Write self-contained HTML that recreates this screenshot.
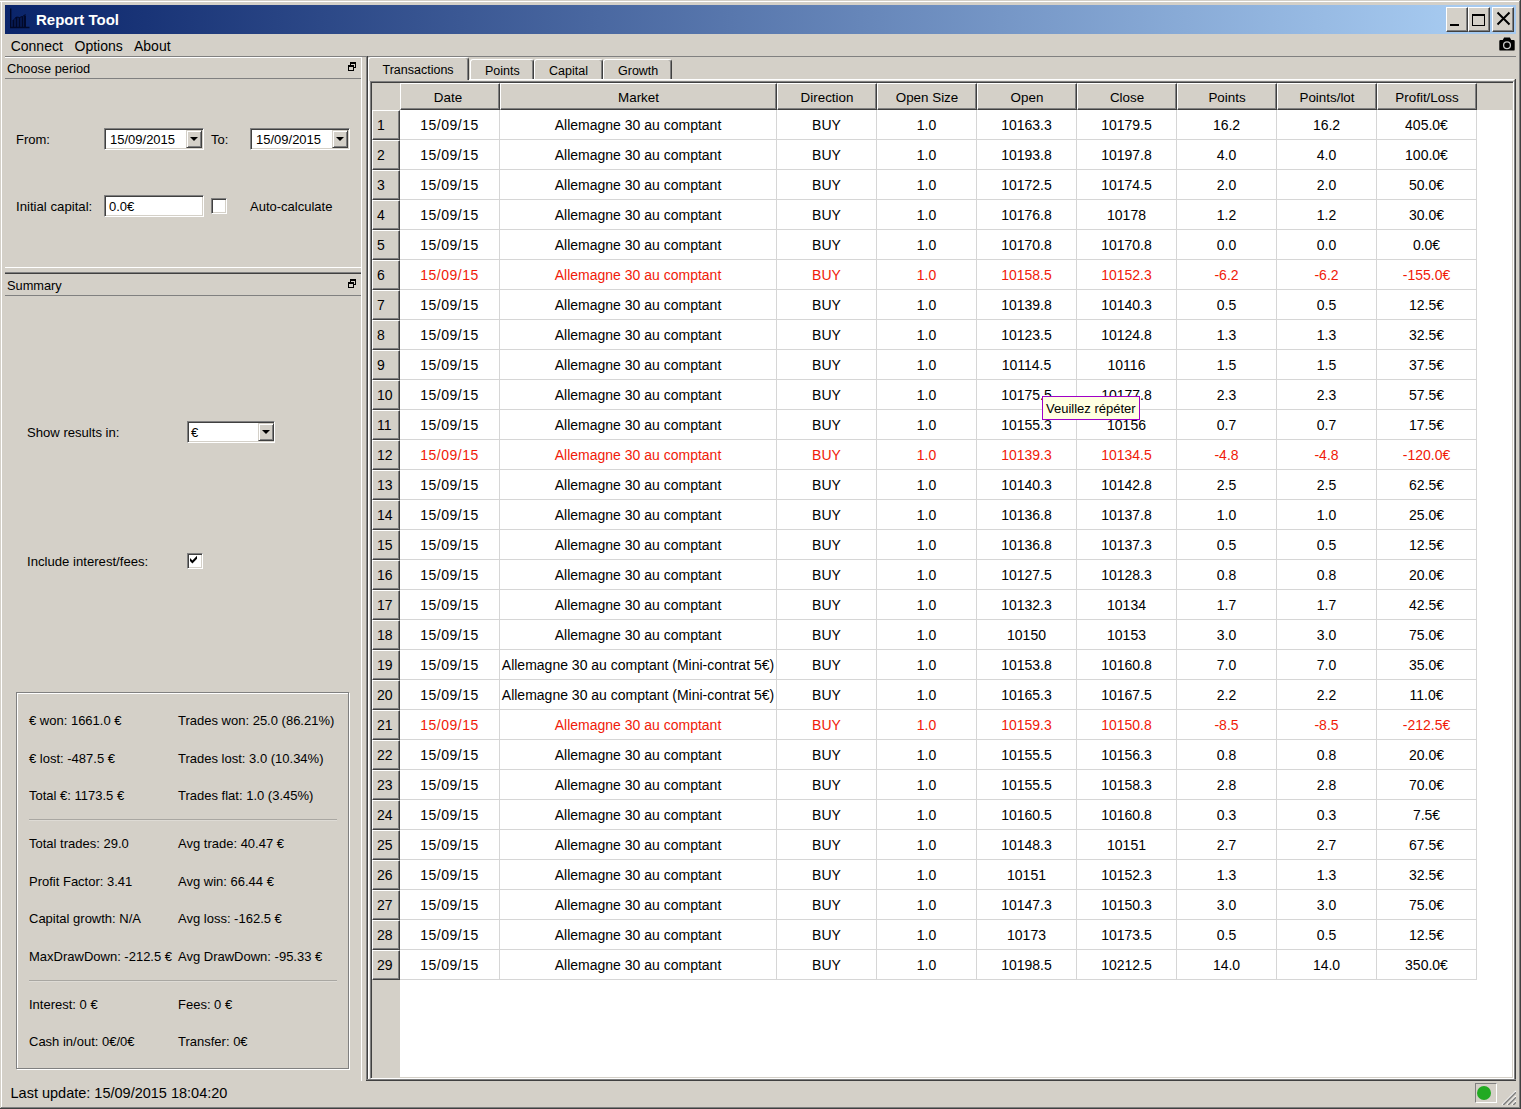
<!DOCTYPE html>
<html lang="en"><head><meta charset="utf-8"><title>Report Tool</title>
<style>
html,body{margin:0;padding:0}
body{width:1521px;height:1109px;background:#d4d0c8;position:relative;overflow:hidden;font-family:"Liberation Sans",sans-serif;color:#000}
.a{position:absolute;box-sizing:border-box}
.t{position:absolute;white-space:pre;margin:0;padding:0}
.sunk{position:absolute;box-sizing:border-box;background:#fff;border:1px solid;border-color:#808080 #fff #fff #808080;box-shadow:inset 1px 1px 0 #404040,inset -1px -1px 0 #d4d0c8}
.btn{position:absolute;box-sizing:border-box;background:#d4d0c8;border:1px solid;border-color:#fff #404040 #404040 #fff;box-shadow:inset -1px -1px 0 #808080}
.btn2{position:absolute;box-sizing:border-box;background:#d4d0c8;border:1px solid;border-color:#d4d0c8 #404040 #404040 #d4d0c8;box-shadow:inset 1px 1px 0 #fff,inset -1px -1px 0 #808080}
.hs{position:absolute;box-sizing:border-box;background:#d4d0c8;border:1px solid;border-color:#fff #404040 #404040 #fff;box-shadow:inset -1px -1px 0 #808080;text-align:center;white-space:pre;overflow:hidden}
.row{position:absolute;left:400px;width:1077px;height:30px;font-size:14px;line-height:29px}
.row span{position:absolute;top:0;height:30px;box-sizing:border-box;padding-top:1px;border-right:1px solid #d6d6d6;border-bottom:1px solid #d6d6d6;text-align:center;white-space:pre;overflow:hidden}
.red{color:#f01a08}
.tab{position:absolute;box-sizing:border-box;background:#d4d0c8;border:1px solid;border-color:#fff #404040 transparent #fff;border-bottom:0;border-radius:3px 3px 0 0;box-shadow:inset -1px 0 0 #808080;text-align:center;white-space:pre}
.arrow{position:absolute;width:0;height:0;border-left:4px solid transparent;border-right:4px solid transparent;border-top:4px solid #000}
</style></head><body>
<div class="a" style="left:0px;top:1px;width:1521px;height:1px;background:#ffffff"></div>
<div class="a" style="left:1px;top:1px;width:1px;height:1107px;background:#ffffff"></div>
<div class="a" style="left:1519px;top:1px;width:1px;height:1107px;background:#808080"></div>
<div class="a" style="left:1520px;top:0px;width:1px;height:1109px;background:#404040"></div>
<div class="a" style="left:1px;top:1107px;width:1519px;height:1px;background:#808080"></div>
<div class="a" style="left:0px;top:1108px;width:1521px;height:1px;background:#404040"></div>
<div class="a" style="left:5px;top:5px;width:1511px;height:29px;background:linear-gradient(to right,#0a246a 0%,#a6caf0 96%,#a6caf0 100%)"></div>
<svg class="a" style="left:9px;top:8px" width="22" height="22" viewBox="0 0 22 22"><g stroke="#00041e" stroke-width="1.4" fill="none" opacity=".85"><path d="M1.7 0.5V19.5H20.5"/><path d="M4.5 19V12M7.5 19V9M10.5 19V9.5M13.5 19V8.5M16 19V7.5" stroke-width="1.9"/><path d="M4.5 12L7.5 9L10.5 9.5L13.5 8.5L16.5 6.5" stroke-width="1"/></g></svg>
<div class="t " style="left:36px;top:11px;font-size:15px;line-height:17px;font-weight:bold;color:#fff">Report Tool</div>
<div class="btn" style="left:1446px;top:7px;width:22px;height:25px"></div>
<div class="btn" style="left:1468px;top:7px;width:22px;height:25px"></div>
<div class="btn" style="left:1492px;top:7px;width:22px;height:25px"></div>
<div class="a" style="left:1450px;top:24px;width:9px;height:2px;background:#000"></div>
<div class="a" style="left:1472px;top:14px;width:13px;height:12px;border:1px solid #000;border-top:2px solid #000"></div>
<svg class="a" style="left:1495px;top:10px" width="17" height="17" viewBox="0 0 17 17"><path d="M2.5 2.5L14.5 14.5M14.5 2.5L2.5 14.5" stroke="#000" stroke-width="2" fill="none"/></svg>
<div class="t " style="left:10.7px;top:37.5px;font-size:14px;line-height:16px;">Connect</div>
<div class="t " style="left:74.5px;top:37.5px;font-size:14px;line-height:16px;">Options</div>
<div class="t " style="left:134px;top:37.5px;font-size:14px;line-height:16px;">About</div>
<svg class="a" style="left:1499px;top:37px" width="16" height="15" viewBox="0 0 16 15"><path d="M1.5 3h2.3l1.3-2.6h5.8l1.3 2.6h2.3a1.2 1.2 0 0 1 1.2 1.2v8.2a1.2 1.2 0 0 1-1.2 1.2h-13a1.2 1.2 0 0 1-1.2-1.2v-8.2a1.2 1.2 0 0 1 1.2-1.2z" fill="#000"/><circle cx="8" cy="8.3" r="3.4" fill="none" stroke="#c8c8c8" stroke-width="1.3"/></svg>
<div class="a" style="left:5px;top:56px;width:1511px;height:1px;background:#808080"></div>
<div class="a" style="left:5px;top:57px;width:357px;height:1px;background:#ffffff"></div>
<div class="a" style="left:361px;top:57px;width:1px;height:1024px;background:#ffffff"></div>
<div class="a" style="left:366px;top:56px;width:1px;height:1025px;background:#808080"></div>
<div class="a" style="left:367px;top:56px;width:1px;height:1025px;background:#404040"></div>
<div class="a" style="left:5px;top:78px;width:356px;height:1px;background:#808080"></div>
<div class="a" style="left:5px;top:267px;width:357px;height:1px;background:#ffffff"></div>
<div class="a" style="left:5px;top:272px;width:356px;height:1px;background:#808080"></div>
<div class="a" style="left:5px;top:273px;width:356px;height:1px;background:#404040"></div>
<div class="a" style="left:5px;top:295px;width:356px;height:1px;background:#808080"></div>
<div class="a" style="left:350px;top:62px;width:6px;height:6px;border:1px solid #000;border-top:2px solid #000"></div>
<div class="a" style="left:348px;top:65px;width:6px;height:6px;border:1px solid #000;border-top:2px solid #000;background:#d4d0c8"></div>
<div class="a" style="left:350px;top:279px;width:6px;height:6px;border:1px solid #000;border-top:2px solid #000"></div>
<div class="a" style="left:348px;top:282px;width:6px;height:6px;border:1px solid #000;border-top:2px solid #000;background:#d4d0c8"></div>
<div class="t " style="left:7px;top:60.5px;font-size:12.8px;line-height:15px;">Choose period</div>
<div class="t " style="left:7px;top:277.5px;font-size:12.8px;line-height:15px;">Summary</div>
<div class="t " style="left:16px;top:131.5px;font-size:13px;line-height:15px;">From:</div>
<div class="sunk" style="left:104px;top:128px;width:100px;height:22px"></div>
<div class="t " style="left:110px;top:131.5px;font-size:13px;line-height:15px;">15/09/2015</div>
<div class="btn2" style="left:186px;top:130px;width:16px;height:18px"></div><div class="arrow" style="left:190px;top:137px"></div>
<div class="t " style="left:211px;top:131.5px;font-size:13px;line-height:15px;">To:</div>
<div class="sunk" style="left:250px;top:128px;width:100px;height:22px"></div>
<div class="t " style="left:256px;top:131.5px;font-size:13px;line-height:15px;">15/09/2015</div>
<div class="btn2" style="left:332px;top:130px;width:16px;height:18px"></div><div class="arrow" style="left:336px;top:137px"></div>
<div class="t " style="left:16px;top:199px;font-size:13.2px;line-height:15px;">Initial capital:</div>
<div class="sunk" style="left:104px;top:195px;width:100px;height:22px"></div>
<div class="t " style="left:109px;top:199px;font-size:13px;line-height:15px;">0.0€</div>
<div class="sunk" style="left:211px;top:198px;width:16px;height:16px"></div>
<div class="t " style="left:250px;top:198.5px;font-size:13px;line-height:15px;">Auto-calculate</div>
<div class="t " style="left:27px;top:425px;font-size:13.1px;line-height:15px;">Show results in:</div>
<div class="sunk" style="left:187px;top:421px;width:88px;height:22px"></div>
<div class="t " style="left:191px;top:425px;font-size:13px;line-height:15px;">€</div>
<div class="btn2" style="left:258px;top:423px;width:16px;height:18px"></div><div class="arrow" style="left:262px;top:430px"></div>
<div class="t " style="left:27px;top:553.5px;font-size:13.15px;line-height:15px;">Include interest/fees:</div>
<div class="sunk" style="left:187px;top:553px;width:16px;height:16px"></div>
<svg class="a" style="left:189px;top:555px" width="9" height="9" viewBox="0 0 9 9"><path d="M1 3L3.4 5.4L8 0.8V3.8L3.4 8.4L1 6z" fill="#000"/></svg>
<div class="a" style="left:17px;top:693px;width:333px;height:377px;border:1px solid #fff"></div>
<div class="a" style="left:16px;top:692px;width:333px;height:377px;border:1px solid #808080"></div>
<div class="t " style="left:29px;top:712.5px;font-size:13px;line-height:15px;">€ won: 1661.0 €</div>
<div class="t " style="left:178px;top:712.5px;font-size:13px;line-height:15px;">Trades won: 25.0 (86.21%)</div>
<div class="t " style="left:29px;top:750.5px;font-size:13px;line-height:15px;">€ lost: -487.5 €</div>
<div class="t " style="left:178px;top:750.5px;font-size:13px;line-height:15px;">Trades lost: 3.0 (10.34%)</div>
<div class="t " style="left:29px;top:787.5px;font-size:13px;line-height:15px;">Total €: 1173.5 €</div>
<div class="t " style="left:178px;top:787.5px;font-size:13px;line-height:15px;">Trades flat: 1.0 (3.45%)</div>
<div class="t " style="left:29px;top:835.5px;font-size:13px;line-height:15px;">Total trades: 29.0</div>
<div class="t " style="left:178px;top:835.5px;font-size:13px;line-height:15px;">Avg trade: 40.47 €</div>
<div class="t " style="left:29px;top:873.5px;font-size:13px;line-height:15px;">Profit Factor: 3.41</div>
<div class="t " style="left:178px;top:873.5px;font-size:13px;line-height:15px;">Avg win: 66.44 €</div>
<div class="t " style="left:29px;top:910.5px;font-size:13px;line-height:15px;">Capital growth: N/A</div>
<div class="t " style="left:178px;top:910.5px;font-size:13px;line-height:15px;">Avg loss: -162.5 €</div>
<div class="t " style="left:29px;top:949px;font-size:13px;line-height:15px;">MaxDrawDown: -212.5 €</div>
<div class="t " style="left:178px;top:949px;font-size:13px;line-height:15px;">Avg DrawDown: -95.33 €</div>
<div class="t " style="left:29px;top:996.5px;font-size:13px;line-height:15px;">Interest: 0 €</div>
<div class="t " style="left:178px;top:996.5px;font-size:13px;line-height:15px;">Fees: 0 €</div>
<div class="t " style="left:29px;top:1033.5px;font-size:13px;line-height:15px;">Cash in/out: 0€/0€</div>
<div class="t " style="left:178px;top:1033.5px;font-size:13px;line-height:15px;">Transfer: 0€</div>
<div class="a" style="left:29px;top:819px;width:308px;height:1px;background:#a9a7a2"></div>
<div class="a" style="left:29px;top:820px;width:308px;height:1px;background:#dedbd5"></div>
<div class="a" style="left:29px;top:980px;width:308px;height:1px;background:#a9a7a2"></div>
<div class="a" style="left:29px;top:981px;width:308px;height:1px;background:#dedbd5"></div>
<div class="t " style="left:10.5px;top:1085px;font-size:14.5px;line-height:16px;">Last update: 15/09/2015 18:04:20</div>
<div class="a" style="left:1475px;top:1083px;width:22px;height:20px;border:1px solid;border-color:#808080 #fff #fff #808080"></div>
<div class="a" style="left:1477px;top:1086px;width:14px;height:14px;background:#22aa22;border-radius:50%"></div>
<svg class="a" style="left:1501px;top:1090px" width="15" height="15" viewBox="0 0 15 15"><g stroke-width="1.2" fill="none"><path d="M1 15L15 1M6 15L15 6M11 15L15 11" stroke="#fff"/><path d="M2.2 15L15 2.2M7.2 15L15 7.2M12.2 15L15 12.2" stroke="#808080" stroke-width="1.6"/></g></svg>
<div class="a" style="left:368px;top:58px;width:1px;height:1021px;background:#ffffff"></div>
<div class="a" style="left:369px;top:81px;width:1px;height:997px;background:#e9e7e3"></div>
<div class="a" style="left:469px;top:79px;width:1045px;height:1px;background:#ffffff"></div>
<div class="a" style="left:469px;top:80px;width:1044px;height:1px;background:#e9e7e3"></div>
<div class="a" style="left:1514px;top:80px;width:1px;height:1001px;background:#808080"></div>
<div class="a" style="left:1515px;top:79px;width:1px;height:1002px;background:#404040"></div>
<div class="a" style="left:366px;top:1079px;width:1150px;height:1px;background:#808080"></div>
<div class="a" style="left:366px;top:1080px;width:1150px;height:1px;background:#404040"></div>
<div class="tab" style="left:368px;top:57px;width:101px;height:23px"></div>
<div class="t " style="left:382.5px;top:63px;font-size:12.5px;line-height:14px;">Transactions</div>
<div class="tab" style="left:470px;top:59px;width:64px;height:20px"></div>
<div class="t " style="left:485px;top:63.5px;font-size:12.5px;line-height:14px;">Points</div>
<div class="tab" style="left:534px;top:59px;width:69px;height:20px"></div>
<div class="t " style="left:549px;top:63.5px;font-size:12.5px;line-height:14px;">Capital</div>
<div class="tab" style="left:603px;top:59px;width:69px;height:20px"></div>
<div class="t " style="left:618px;top:63.5px;font-size:12.5px;line-height:14px;">Growth</div>
<div class="a" style="left:370px;top:81px;width:1144px;height:998px;background:#fff;border:1px solid;border-color:#808080 #fff #fff #808080;box-shadow:inset 1px 1px 0 #404040,inset -1px -1px 0 #d4d0c8"></div>
<div class="a" style="left:372px;top:83px;width:1140px;height:27px;background:#d4d0c8"></div>
<div class="a" style="left:372px;top:110px;width:28px;height:967px;background:#d4d0c8"></div>
<div class="hs" style="left:400px;top:83px;width:100px;height:27px;font-size:13.4px;line-height:23px;padding-top:2px;padding-right:4px">Date</div>
<div class="hs" style="left:500px;top:83px;width:277px;height:27px;font-size:13.4px;line-height:23px;padding-top:2px;">Market</div>
<div class="hs" style="left:777px;top:83px;width:100px;height:27px;font-size:13.4px;line-height:23px;padding-top:2px;">Direction</div>
<div class="hs" style="left:877px;top:83px;width:100px;height:27px;font-size:13.4px;line-height:23px;padding-top:2px;">Open Size</div>
<div class="hs" style="left:977px;top:83px;width:100px;height:27px;font-size:13.4px;line-height:23px;padding-top:2px;">Open</div>
<div class="hs" style="left:1077px;top:83px;width:100px;height:27px;font-size:13.4px;line-height:23px;padding-top:2px;">Close</div>
<div class="hs" style="left:1177px;top:83px;width:100px;height:27px;font-size:13.4px;line-height:23px;padding-top:2px;">Points</div>
<div class="hs" style="left:1277px;top:83px;width:100px;height:27px;font-size:13.4px;line-height:23px;padding-top:2px;">Points/lot</div>
<div class="hs" style="left:1377px;top:83px;width:100px;height:27px;font-size:13.4px;line-height:23px;padding-top:2px;">Profit/Loss</div>
<div class="hs" style="left:372px;top:110px;width:28px;height:30px;font-size:14px;line-height:26px;text-align:left;padding-left:4px;padding-top:1px">1</div>
<div class="row" style="top:110px"><span style="left:0px;width:100px;letter-spacing:.5px">15/09/15</span><span style="left:100px;width:277px">Allemagne 30 au comptant</span><span style="left:377px;width:100px">BUY</span><span style="left:477px;width:100px">1.0</span><span style="left:577px;width:100px">10163.3</span><span style="left:677px;width:100px">10179.5</span><span style="left:777px;width:100px">16.2</span><span style="left:877px;width:100px">16.2</span><span style="left:977px;width:100px">405.0€</span></div>
<div class="hs" style="left:372px;top:140px;width:28px;height:30px;font-size:14px;line-height:26px;text-align:left;padding-left:4px;padding-top:1px">2</div>
<div class="row" style="top:140px"><span style="left:0px;width:100px;letter-spacing:.5px">15/09/15</span><span style="left:100px;width:277px">Allemagne 30 au comptant</span><span style="left:377px;width:100px">BUY</span><span style="left:477px;width:100px">1.0</span><span style="left:577px;width:100px">10193.8</span><span style="left:677px;width:100px">10197.8</span><span style="left:777px;width:100px">4.0</span><span style="left:877px;width:100px">4.0</span><span style="left:977px;width:100px">100.0€</span></div>
<div class="hs" style="left:372px;top:170px;width:28px;height:30px;font-size:14px;line-height:26px;text-align:left;padding-left:4px;padding-top:1px">3</div>
<div class="row" style="top:170px"><span style="left:0px;width:100px;letter-spacing:.5px">15/09/15</span><span style="left:100px;width:277px">Allemagne 30 au comptant</span><span style="left:377px;width:100px">BUY</span><span style="left:477px;width:100px">1.0</span><span style="left:577px;width:100px">10172.5</span><span style="left:677px;width:100px">10174.5</span><span style="left:777px;width:100px">2.0</span><span style="left:877px;width:100px">2.0</span><span style="left:977px;width:100px">50.0€</span></div>
<div class="hs" style="left:372px;top:200px;width:28px;height:30px;font-size:14px;line-height:26px;text-align:left;padding-left:4px;padding-top:1px">4</div>
<div class="row" style="top:200px"><span style="left:0px;width:100px;letter-spacing:.5px">15/09/15</span><span style="left:100px;width:277px">Allemagne 30 au comptant</span><span style="left:377px;width:100px">BUY</span><span style="left:477px;width:100px">1.0</span><span style="left:577px;width:100px">10176.8</span><span style="left:677px;width:100px">10178</span><span style="left:777px;width:100px">1.2</span><span style="left:877px;width:100px">1.2</span><span style="left:977px;width:100px">30.0€</span></div>
<div class="hs" style="left:372px;top:230px;width:28px;height:30px;font-size:14px;line-height:26px;text-align:left;padding-left:4px;padding-top:1px">5</div>
<div class="row" style="top:230px"><span style="left:0px;width:100px;letter-spacing:.5px">15/09/15</span><span style="left:100px;width:277px">Allemagne 30 au comptant</span><span style="left:377px;width:100px">BUY</span><span style="left:477px;width:100px">1.0</span><span style="left:577px;width:100px">10170.8</span><span style="left:677px;width:100px">10170.8</span><span style="left:777px;width:100px">0.0</span><span style="left:877px;width:100px">0.0</span><span style="left:977px;width:100px">0.0€</span></div>
<div class="hs" style="left:372px;top:260px;width:28px;height:30px;font-size:14px;line-height:26px;text-align:left;padding-left:4px;padding-top:1px">6</div>
<div class="row red" style="top:260px"><span style="left:0px;width:100px;letter-spacing:.5px">15/09/15</span><span style="left:100px;width:277px">Allemagne 30 au comptant</span><span style="left:377px;width:100px">BUY</span><span style="left:477px;width:100px">1.0</span><span style="left:577px;width:100px">10158.5</span><span style="left:677px;width:100px">10152.3</span><span style="left:777px;width:100px">-6.2</span><span style="left:877px;width:100px">-6.2</span><span style="left:977px;width:100px">-155.0€</span></div>
<div class="hs" style="left:372px;top:290px;width:28px;height:30px;font-size:14px;line-height:26px;text-align:left;padding-left:4px;padding-top:1px">7</div>
<div class="row" style="top:290px"><span style="left:0px;width:100px;letter-spacing:.5px">15/09/15</span><span style="left:100px;width:277px">Allemagne 30 au comptant</span><span style="left:377px;width:100px">BUY</span><span style="left:477px;width:100px">1.0</span><span style="left:577px;width:100px">10139.8</span><span style="left:677px;width:100px">10140.3</span><span style="left:777px;width:100px">0.5</span><span style="left:877px;width:100px">0.5</span><span style="left:977px;width:100px">12.5€</span></div>
<div class="hs" style="left:372px;top:320px;width:28px;height:30px;font-size:14px;line-height:26px;text-align:left;padding-left:4px;padding-top:1px">8</div>
<div class="row" style="top:320px"><span style="left:0px;width:100px;letter-spacing:.5px">15/09/15</span><span style="left:100px;width:277px">Allemagne 30 au comptant</span><span style="left:377px;width:100px">BUY</span><span style="left:477px;width:100px">1.0</span><span style="left:577px;width:100px">10123.5</span><span style="left:677px;width:100px">10124.8</span><span style="left:777px;width:100px">1.3</span><span style="left:877px;width:100px">1.3</span><span style="left:977px;width:100px">32.5€</span></div>
<div class="hs" style="left:372px;top:350px;width:28px;height:30px;font-size:14px;line-height:26px;text-align:left;padding-left:4px;padding-top:1px">9</div>
<div class="row" style="top:350px"><span style="left:0px;width:100px;letter-spacing:.5px">15/09/15</span><span style="left:100px;width:277px">Allemagne 30 au comptant</span><span style="left:377px;width:100px">BUY</span><span style="left:477px;width:100px">1.0</span><span style="left:577px;width:100px">10114.5</span><span style="left:677px;width:100px">10116</span><span style="left:777px;width:100px">1.5</span><span style="left:877px;width:100px">1.5</span><span style="left:977px;width:100px">37.5€</span></div>
<div class="hs" style="left:372px;top:380px;width:28px;height:30px;font-size:14px;line-height:26px;text-align:left;padding-left:4px;padding-top:1px">10</div>
<div class="row" style="top:380px"><span style="left:0px;width:100px;letter-spacing:.5px">15/09/15</span><span style="left:100px;width:277px">Allemagne 30 au comptant</span><span style="left:377px;width:100px">BUY</span><span style="left:477px;width:100px">1.0</span><span style="left:577px;width:100px">10175.5</span><span style="left:677px;width:100px">10177.8</span><span style="left:777px;width:100px">2.3</span><span style="left:877px;width:100px">2.3</span><span style="left:977px;width:100px">57.5€</span></div>
<div class="hs" style="left:372px;top:410px;width:28px;height:30px;font-size:14px;line-height:26px;text-align:left;padding-left:4px;padding-top:1px">11</div>
<div class="row" style="top:410px"><span style="left:0px;width:100px;letter-spacing:.5px">15/09/15</span><span style="left:100px;width:277px">Allemagne 30 au comptant</span><span style="left:377px;width:100px">BUY</span><span style="left:477px;width:100px">1.0</span><span style="left:577px;width:100px">10155.3</span><span style="left:677px;width:100px">10156</span><span style="left:777px;width:100px">0.7</span><span style="left:877px;width:100px">0.7</span><span style="left:977px;width:100px">17.5€</span></div>
<div class="hs" style="left:372px;top:440px;width:28px;height:30px;font-size:14px;line-height:26px;text-align:left;padding-left:4px;padding-top:1px">12</div>
<div class="row red" style="top:440px"><span style="left:0px;width:100px;letter-spacing:.5px">15/09/15</span><span style="left:100px;width:277px">Allemagne 30 au comptant</span><span style="left:377px;width:100px">BUY</span><span style="left:477px;width:100px">1.0</span><span style="left:577px;width:100px">10139.3</span><span style="left:677px;width:100px">10134.5</span><span style="left:777px;width:100px">-4.8</span><span style="left:877px;width:100px">-4.8</span><span style="left:977px;width:100px">-120.0€</span></div>
<div class="hs" style="left:372px;top:470px;width:28px;height:30px;font-size:14px;line-height:26px;text-align:left;padding-left:4px;padding-top:1px">13</div>
<div class="row" style="top:470px"><span style="left:0px;width:100px;letter-spacing:.5px">15/09/15</span><span style="left:100px;width:277px">Allemagne 30 au comptant</span><span style="left:377px;width:100px">BUY</span><span style="left:477px;width:100px">1.0</span><span style="left:577px;width:100px">10140.3</span><span style="left:677px;width:100px">10142.8</span><span style="left:777px;width:100px">2.5</span><span style="left:877px;width:100px">2.5</span><span style="left:977px;width:100px">62.5€</span></div>
<div class="hs" style="left:372px;top:500px;width:28px;height:30px;font-size:14px;line-height:26px;text-align:left;padding-left:4px;padding-top:1px">14</div>
<div class="row" style="top:500px"><span style="left:0px;width:100px;letter-spacing:.5px">15/09/15</span><span style="left:100px;width:277px">Allemagne 30 au comptant</span><span style="left:377px;width:100px">BUY</span><span style="left:477px;width:100px">1.0</span><span style="left:577px;width:100px">10136.8</span><span style="left:677px;width:100px">10137.8</span><span style="left:777px;width:100px">1.0</span><span style="left:877px;width:100px">1.0</span><span style="left:977px;width:100px">25.0€</span></div>
<div class="hs" style="left:372px;top:530px;width:28px;height:30px;font-size:14px;line-height:26px;text-align:left;padding-left:4px;padding-top:1px">15</div>
<div class="row" style="top:530px"><span style="left:0px;width:100px;letter-spacing:.5px">15/09/15</span><span style="left:100px;width:277px">Allemagne 30 au comptant</span><span style="left:377px;width:100px">BUY</span><span style="left:477px;width:100px">1.0</span><span style="left:577px;width:100px">10136.8</span><span style="left:677px;width:100px">10137.3</span><span style="left:777px;width:100px">0.5</span><span style="left:877px;width:100px">0.5</span><span style="left:977px;width:100px">12.5€</span></div>
<div class="hs" style="left:372px;top:560px;width:28px;height:30px;font-size:14px;line-height:26px;text-align:left;padding-left:4px;padding-top:1px">16</div>
<div class="row" style="top:560px"><span style="left:0px;width:100px;letter-spacing:.5px">15/09/15</span><span style="left:100px;width:277px">Allemagne 30 au comptant</span><span style="left:377px;width:100px">BUY</span><span style="left:477px;width:100px">1.0</span><span style="left:577px;width:100px">10127.5</span><span style="left:677px;width:100px">10128.3</span><span style="left:777px;width:100px">0.8</span><span style="left:877px;width:100px">0.8</span><span style="left:977px;width:100px">20.0€</span></div>
<div class="hs" style="left:372px;top:590px;width:28px;height:30px;font-size:14px;line-height:26px;text-align:left;padding-left:4px;padding-top:1px">17</div>
<div class="row" style="top:590px"><span style="left:0px;width:100px;letter-spacing:.5px">15/09/15</span><span style="left:100px;width:277px">Allemagne 30 au comptant</span><span style="left:377px;width:100px">BUY</span><span style="left:477px;width:100px">1.0</span><span style="left:577px;width:100px">10132.3</span><span style="left:677px;width:100px">10134</span><span style="left:777px;width:100px">1.7</span><span style="left:877px;width:100px">1.7</span><span style="left:977px;width:100px">42.5€</span></div>
<div class="hs" style="left:372px;top:620px;width:28px;height:30px;font-size:14px;line-height:26px;text-align:left;padding-left:4px;padding-top:1px">18</div>
<div class="row" style="top:620px"><span style="left:0px;width:100px;letter-spacing:.5px">15/09/15</span><span style="left:100px;width:277px">Allemagne 30 au comptant</span><span style="left:377px;width:100px">BUY</span><span style="left:477px;width:100px">1.0</span><span style="left:577px;width:100px">10150</span><span style="left:677px;width:100px">10153</span><span style="left:777px;width:100px">3.0</span><span style="left:877px;width:100px">3.0</span><span style="left:977px;width:100px">75.0€</span></div>
<div class="hs" style="left:372px;top:650px;width:28px;height:30px;font-size:14px;line-height:26px;text-align:left;padding-left:4px;padding-top:1px">19</div>
<div class="row" style="top:650px"><span style="left:0px;width:100px;letter-spacing:.5px">15/09/15</span><span style="left:100px;width:277px">Allemagne 30 au comptant (Mini-contrat 5€)</span><span style="left:377px;width:100px">BUY</span><span style="left:477px;width:100px">1.0</span><span style="left:577px;width:100px">10153.8</span><span style="left:677px;width:100px">10160.8</span><span style="left:777px;width:100px">7.0</span><span style="left:877px;width:100px">7.0</span><span style="left:977px;width:100px">35.0€</span></div>
<div class="hs" style="left:372px;top:680px;width:28px;height:30px;font-size:14px;line-height:26px;text-align:left;padding-left:4px;padding-top:1px">20</div>
<div class="row" style="top:680px"><span style="left:0px;width:100px;letter-spacing:.5px">15/09/15</span><span style="left:100px;width:277px">Allemagne 30 au comptant (Mini-contrat 5€)</span><span style="left:377px;width:100px">BUY</span><span style="left:477px;width:100px">1.0</span><span style="left:577px;width:100px">10165.3</span><span style="left:677px;width:100px">10167.5</span><span style="left:777px;width:100px">2.2</span><span style="left:877px;width:100px">2.2</span><span style="left:977px;width:100px">11.0€</span></div>
<div class="hs" style="left:372px;top:710px;width:28px;height:30px;font-size:14px;line-height:26px;text-align:left;padding-left:4px;padding-top:1px">21</div>
<div class="row red" style="top:710px"><span style="left:0px;width:100px;letter-spacing:.5px">15/09/15</span><span style="left:100px;width:277px">Allemagne 30 au comptant</span><span style="left:377px;width:100px">BUY</span><span style="left:477px;width:100px">1.0</span><span style="left:577px;width:100px">10159.3</span><span style="left:677px;width:100px">10150.8</span><span style="left:777px;width:100px">-8.5</span><span style="left:877px;width:100px">-8.5</span><span style="left:977px;width:100px">-212.5€</span></div>
<div class="hs" style="left:372px;top:740px;width:28px;height:30px;font-size:14px;line-height:26px;text-align:left;padding-left:4px;padding-top:1px">22</div>
<div class="row" style="top:740px"><span style="left:0px;width:100px;letter-spacing:.5px">15/09/15</span><span style="left:100px;width:277px">Allemagne 30 au comptant</span><span style="left:377px;width:100px">BUY</span><span style="left:477px;width:100px">1.0</span><span style="left:577px;width:100px">10155.5</span><span style="left:677px;width:100px">10156.3</span><span style="left:777px;width:100px">0.8</span><span style="left:877px;width:100px">0.8</span><span style="left:977px;width:100px">20.0€</span></div>
<div class="hs" style="left:372px;top:770px;width:28px;height:30px;font-size:14px;line-height:26px;text-align:left;padding-left:4px;padding-top:1px">23</div>
<div class="row" style="top:770px"><span style="left:0px;width:100px;letter-spacing:.5px">15/09/15</span><span style="left:100px;width:277px">Allemagne 30 au comptant</span><span style="left:377px;width:100px">BUY</span><span style="left:477px;width:100px">1.0</span><span style="left:577px;width:100px">10155.5</span><span style="left:677px;width:100px">10158.3</span><span style="left:777px;width:100px">2.8</span><span style="left:877px;width:100px">2.8</span><span style="left:977px;width:100px">70.0€</span></div>
<div class="hs" style="left:372px;top:800px;width:28px;height:30px;font-size:14px;line-height:26px;text-align:left;padding-left:4px;padding-top:1px">24</div>
<div class="row" style="top:800px"><span style="left:0px;width:100px;letter-spacing:.5px">15/09/15</span><span style="left:100px;width:277px">Allemagne 30 au comptant</span><span style="left:377px;width:100px">BUY</span><span style="left:477px;width:100px">1.0</span><span style="left:577px;width:100px">10160.5</span><span style="left:677px;width:100px">10160.8</span><span style="left:777px;width:100px">0.3</span><span style="left:877px;width:100px">0.3</span><span style="left:977px;width:100px">7.5€</span></div>
<div class="hs" style="left:372px;top:830px;width:28px;height:30px;font-size:14px;line-height:26px;text-align:left;padding-left:4px;padding-top:1px">25</div>
<div class="row" style="top:830px"><span style="left:0px;width:100px;letter-spacing:.5px">15/09/15</span><span style="left:100px;width:277px">Allemagne 30 au comptant</span><span style="left:377px;width:100px">BUY</span><span style="left:477px;width:100px">1.0</span><span style="left:577px;width:100px">10148.3</span><span style="left:677px;width:100px">10151</span><span style="left:777px;width:100px">2.7</span><span style="left:877px;width:100px">2.7</span><span style="left:977px;width:100px">67.5€</span></div>
<div class="hs" style="left:372px;top:860px;width:28px;height:30px;font-size:14px;line-height:26px;text-align:left;padding-left:4px;padding-top:1px">26</div>
<div class="row" style="top:860px"><span style="left:0px;width:100px;letter-spacing:.5px">15/09/15</span><span style="left:100px;width:277px">Allemagne 30 au comptant</span><span style="left:377px;width:100px">BUY</span><span style="left:477px;width:100px">1.0</span><span style="left:577px;width:100px">10151</span><span style="left:677px;width:100px">10152.3</span><span style="left:777px;width:100px">1.3</span><span style="left:877px;width:100px">1.3</span><span style="left:977px;width:100px">32.5€</span></div>
<div class="hs" style="left:372px;top:890px;width:28px;height:30px;font-size:14px;line-height:26px;text-align:left;padding-left:4px;padding-top:1px">27</div>
<div class="row" style="top:890px"><span style="left:0px;width:100px;letter-spacing:.5px">15/09/15</span><span style="left:100px;width:277px">Allemagne 30 au comptant</span><span style="left:377px;width:100px">BUY</span><span style="left:477px;width:100px">1.0</span><span style="left:577px;width:100px">10147.3</span><span style="left:677px;width:100px">10150.3</span><span style="left:777px;width:100px">3.0</span><span style="left:877px;width:100px">3.0</span><span style="left:977px;width:100px">75.0€</span></div>
<div class="hs" style="left:372px;top:920px;width:28px;height:30px;font-size:14px;line-height:26px;text-align:left;padding-left:4px;padding-top:1px">28</div>
<div class="row" style="top:920px"><span style="left:0px;width:100px;letter-spacing:.5px">15/09/15</span><span style="left:100px;width:277px">Allemagne 30 au comptant</span><span style="left:377px;width:100px">BUY</span><span style="left:477px;width:100px">1.0</span><span style="left:577px;width:100px">10173</span><span style="left:677px;width:100px">10173.5</span><span style="left:777px;width:100px">0.5</span><span style="left:877px;width:100px">0.5</span><span style="left:977px;width:100px">12.5€</span></div>
<div class="hs" style="left:372px;top:950px;width:28px;height:30px;font-size:14px;line-height:26px;text-align:left;padding-left:4px;padding-top:1px">29</div>
<div class="row" style="top:950px"><span style="left:0px;width:100px;letter-spacing:.5px">15/09/15</span><span style="left:100px;width:277px">Allemagne 30 au comptant</span><span style="left:377px;width:100px">BUY</span><span style="left:477px;width:100px">1.0</span><span style="left:577px;width:100px">10198.5</span><span style="left:677px;width:100px">10212.5</span><span style="left:777px;width:100px">14.0</span><span style="left:877px;width:100px">14.0</span><span style="left:977px;width:100px">350.0€</span></div>
<div class="a" style="left:1042px;top:396px;width:98px;height:24px;background:#ffffe1;border:1px solid #a000c8"></div>
<div class="t " style="left:1046px;top:400.5px;font-size:13px;line-height:15px;">Veuillez répéter</div>
</body></html>
